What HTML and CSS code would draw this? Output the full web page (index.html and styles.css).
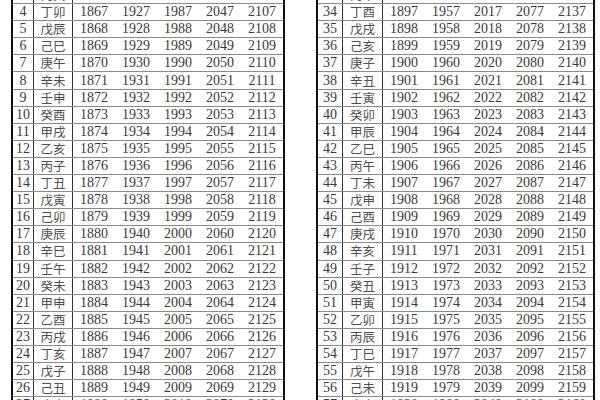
FILE: index.html
```html
<!DOCTYPE html>
<html lang="zh">
<head>
<meta charset="utf-8">
<title>六十甲子年份表</title>
<link rel="stylesheet" href="styles.css">
</head>
<body>
<div class="page">
  <div class="sheet sheet-left">
    <div class="row"><span class="num">3</span><span class="gz">丙寅</span><span class="yr">1866</span><span class="yr">1926</span><span class="yr">1986</span><span class="yr">2046</span><span class="yr">2106</span></div>
    <div class="row"><span class="num">4</span><span class="gz">丁卯</span><span class="yr">1867</span><span class="yr">1927</span><span class="yr">1987</span><span class="yr">2047</span><span class="yr">2107</span></div>
    <div class="row"><span class="num">5</span><span class="gz">戊辰</span><span class="yr">1868</span><span class="yr">1928</span><span class="yr">1988</span><span class="yr">2048</span><span class="yr">2108</span></div>
    <div class="row"><span class="num">6</span><span class="gz">己巳</span><span class="yr">1869</span><span class="yr">1929</span><span class="yr">1989</span><span class="yr">2049</span><span class="yr">2109</span></div>
    <div class="row"><span class="num">7</span><span class="gz">庚午</span><span class="yr">1870</span><span class="yr">1930</span><span class="yr">1990</span><span class="yr">2050</span><span class="yr">2110</span></div>
    <div class="row"><span class="num">8</span><span class="gz">辛未</span><span class="yr">1871</span><span class="yr">1931</span><span class="yr">1991</span><span class="yr">2051</span><span class="yr">2111</span></div>
    <div class="row"><span class="num">9</span><span class="gz">壬申</span><span class="yr">1872</span><span class="yr">1932</span><span class="yr">1992</span><span class="yr">2052</span><span class="yr">2112</span></div>
    <div class="row"><span class="num">10</span><span class="gz">癸酉</span><span class="yr">1873</span><span class="yr">1933</span><span class="yr">1993</span><span class="yr">2053</span><span class="yr">2113</span></div>
    <div class="row"><span class="num">11</span><span class="gz">甲戌</span><span class="yr">1874</span><span class="yr">1934</span><span class="yr">1994</span><span class="yr">2054</span><span class="yr">2114</span></div>
    <div class="row"><span class="num">12</span><span class="gz">乙亥</span><span class="yr">1875</span><span class="yr">1935</span><span class="yr">1995</span><span class="yr">2055</span><span class="yr">2115</span></div>
    <div class="row"><span class="num">13</span><span class="gz">丙子</span><span class="yr">1876</span><span class="yr">1936</span><span class="yr">1996</span><span class="yr">2056</span><span class="yr">2116</span></div>
    <div class="row"><span class="num">14</span><span class="gz">丁丑</span><span class="yr">1877</span><span class="yr">1937</span><span class="yr">1997</span><span class="yr">2057</span><span class="yr">2117</span></div>
    <div class="row"><span class="num">15</span><span class="gz">戊寅</span><span class="yr">1878</span><span class="yr">1938</span><span class="yr">1998</span><span class="yr">2058</span><span class="yr">2118</span></div>
    <div class="row"><span class="num">16</span><span class="gz">己卯</span><span class="yr">1879</span><span class="yr">1939</span><span class="yr">1999</span><span class="yr">2059</span><span class="yr">2119</span></div>
    <div class="row"><span class="num">17</span><span class="gz">庚辰</span><span class="yr">1880</span><span class="yr">1940</span><span class="yr">2000</span><span class="yr">2060</span><span class="yr">2120</span></div>
    <div class="row"><span class="num">18</span><span class="gz">辛巳</span><span class="yr">1881</span><span class="yr">1941</span><span class="yr">2001</span><span class="yr">2061</span><span class="yr">2121</span></div>
    <div class="row"><span class="num">19</span><span class="gz">壬午</span><span class="yr">1882</span><span class="yr">1942</span><span class="yr">2002</span><span class="yr">2062</span><span class="yr">2122</span></div>
    <div class="row"><span class="num">20</span><span class="gz">癸未</span><span class="yr">1883</span><span class="yr">1943</span><span class="yr">2003</span><span class="yr">2063</span><span class="yr">2123</span></div>
    <div class="row"><span class="num">21</span><span class="gz">甲申</span><span class="yr">1884</span><span class="yr">1944</span><span class="yr">2004</span><span class="yr">2064</span><span class="yr">2124</span></div>
    <div class="row"><span class="num">22</span><span class="gz">乙酉</span><span class="yr">1885</span><span class="yr">1945</span><span class="yr">2005</span><span class="yr">2065</span><span class="yr">2125</span></div>
    <div class="row"><span class="num">23</span><span class="gz">丙戌</span><span class="yr">1886</span><span class="yr">1946</span><span class="yr">2006</span><span class="yr">2066</span><span class="yr">2126</span></div>
    <div class="row"><span class="num">24</span><span class="gz">丁亥</span><span class="yr">1887</span><span class="yr">1947</span><span class="yr">2007</span><span class="yr">2067</span><span class="yr">2127</span></div>
    <div class="row"><span class="num">25</span><span class="gz">戊子</span><span class="yr">1888</span><span class="yr">1948</span><span class="yr">2008</span><span class="yr">2068</span><span class="yr">2128</span></div>
    <div class="row"><span class="num">26</span><span class="gz">己丑</span><span class="yr">1889</span><span class="yr">1949</span><span class="yr">2009</span><span class="yr">2069</span><span class="yr">2129</span></div>
    <div class="row"><span class="num">27</span><span class="gz">庚寅</span><span class="yr">1890</span><span class="yr">1950</span><span class="yr">2010</span><span class="yr">2070</span><span class="yr">2130</span></div>
  </div>
  <div class="sheet sheet-right">
    <div class="row"><span class="num">33</span><span class="gz">丙申</span><span class="yr">1896</span><span class="yr">1956</span><span class="yr">2016</span><span class="yr">2076</span><span class="yr">2136</span></div>
    <div class="row"><span class="num">34</span><span class="gz">丁酉</span><span class="yr">1897</span><span class="yr">1957</span><span class="yr">2017</span><span class="yr">2077</span><span class="yr">2137</span></div>
    <div class="row"><span class="num">35</span><span class="gz">戊戌</span><span class="yr">1898</span><span class="yr">1958</span><span class="yr">2018</span><span class="yr">2078</span><span class="yr">2138</span></div>
    <div class="row"><span class="num">36</span><span class="gz">己亥</span><span class="yr">1899</span><span class="yr">1959</span><span class="yr">2019</span><span class="yr">2079</span><span class="yr">2139</span></div>
    <div class="row"><span class="num">37</span><span class="gz">庚子</span><span class="yr">1900</span><span class="yr">1960</span><span class="yr">2020</span><span class="yr">2080</span><span class="yr">2140</span></div>
    <div class="row"><span class="num">38</span><span class="gz">辛丑</span><span class="yr">1901</span><span class="yr">1961</span><span class="yr">2021</span><span class="yr">2081</span><span class="yr">2141</span></div>
    <div class="row"><span class="num">39</span><span class="gz">壬寅</span><span class="yr">1902</span><span class="yr">1962</span><span class="yr">2022</span><span class="yr">2082</span><span class="yr">2142</span></div>
    <div class="row"><span class="num">40</span><span class="gz">癸卯</span><span class="yr">1903</span><span class="yr">1963</span><span class="yr">2023</span><span class="yr">2083</span><span class="yr">2143</span></div>
    <div class="row"><span class="num">41</span><span class="gz">甲辰</span><span class="yr">1904</span><span class="yr">1964</span><span class="yr">2024</span><span class="yr">2084</span><span class="yr">2144</span></div>
    <div class="row"><span class="num">42</span><span class="gz">乙巳</span><span class="yr">1905</span><span class="yr">1965</span><span class="yr">2025</span><span class="yr">2085</span><span class="yr">2145</span></div>
    <div class="row"><span class="num">43</span><span class="gz">丙午</span><span class="yr">1906</span><span class="yr">1966</span><span class="yr">2026</span><span class="yr">2086</span><span class="yr">2146</span></div>
    <div class="row"><span class="num">44</span><span class="gz">丁未</span><span class="yr">1907</span><span class="yr">1967</span><span class="yr">2027</span><span class="yr">2087</span><span class="yr">2147</span></div>
    <div class="row"><span class="num">45</span><span class="gz">戊申</span><span class="yr">1908</span><span class="yr">1968</span><span class="yr">2028</span><span class="yr">2088</span><span class="yr">2148</span></div>
    <div class="row"><span class="num">46</span><span class="gz">己酉</span><span class="yr">1909</span><span class="yr">1969</span><span class="yr">2029</span><span class="yr">2089</span><span class="yr">2149</span></div>
    <div class="row"><span class="num">47</span><span class="gz">庚戌</span><span class="yr">1910</span><span class="yr">1970</span><span class="yr">2030</span><span class="yr">2090</span><span class="yr">2150</span></div>
    <div class="row"><span class="num">48</span><span class="gz">辛亥</span><span class="yr">1911</span><span class="yr">1971</span><span class="yr">2031</span><span class="yr">2091</span><span class="yr">2151</span></div>
    <div class="row"><span class="num">49</span><span class="gz">壬子</span><span class="yr">1912</span><span class="yr">1972</span><span class="yr">2032</span><span class="yr">2092</span><span class="yr">2152</span></div>
    <div class="row"><span class="num">50</span><span class="gz">癸丑</span><span class="yr">1913</span><span class="yr">1973</span><span class="yr">2033</span><span class="yr">2093</span><span class="yr">2153</span></div>
    <div class="row"><span class="num">51</span><span class="gz">甲寅</span><span class="yr">1914</span><span class="yr">1974</span><span class="yr">2034</span><span class="yr">2094</span><span class="yr">2154</span></div>
    <div class="row"><span class="num">52</span><span class="gz">乙卯</span><span class="yr">1915</span><span class="yr">1975</span><span class="yr">2035</span><span class="yr">2095</span><span class="yr">2155</span></div>
    <div class="row"><span class="num">53</span><span class="gz">丙辰</span><span class="yr">1916</span><span class="yr">1976</span><span class="yr">2036</span><span class="yr">2096</span><span class="yr">2156</span></div>
    <div class="row"><span class="num">54</span><span class="gz">丁巳</span><span class="yr">1917</span><span class="yr">1977</span><span class="yr">2037</span><span class="yr">2097</span><span class="yr">2157</span></div>
    <div class="row"><span class="num">55</span><span class="gz">戊午</span><span class="yr">1918</span><span class="yr">1978</span><span class="yr">2038</span><span class="yr">2098</span><span class="yr">2158</span></div>
    <div class="row"><span class="num">56</span><span class="gz">己未</span><span class="yr">1919</span><span class="yr">1979</span><span class="yr">2039</span><span class="yr">2099</span><span class="yr">2159</span></div>
    <div class="row"><span class="num">57</span><span class="gz">庚申</span><span class="yr">1920</span><span class="yr">1980</span><span class="yr">2040</span><span class="yr">2100</span><span class="yr">2160</span></div>
  </div>
</div>
</body>
</html>
```
FILE: styles.css
```css
html, body {
  margin: 0;
  padding: 0;
  background: #fff;
  overflow: hidden;
}

.page {
  display: flex;
  align-items: flex-start;
  padding-left: 11px;
  gap: 31px;
  margin-top: -13px;
}

.sheet {
  border-left: 2px solid #111;
  border-right: 2px solid #111;
  font-family: "Liberation Serif", "Noto Sans CJK SC", serif;
  color: #3a3a3a;
}

.row {
  display: grid;
  height: 17.1px;
  box-sizing: border-box;
  border-bottom: 1px solid #8a8a8a;
  align-items: center;
}

.sheet-left .row {
  grid-template-columns: 21px 39px repeat(5, 42px);
}

.sheet-right .row {
  grid-template-columns: 25px 40px repeat(5, 42px);
}

.row span {
  text-align: center;
  line-height: 14px;
  height: 100%;
  display: flex;
  align-items: center;
  justify-content: center;
}

.num {
  font-size: 14px;
  border-right: 1px solid #333;
}

.gz {
  font-family: "Noto Sans CJK SC", sans-serif;
  font-size: 12.5px;
  color: #505050;
  border-right: 1px solid #333;
}

.yr {
  font-size: 14px;
}
```
